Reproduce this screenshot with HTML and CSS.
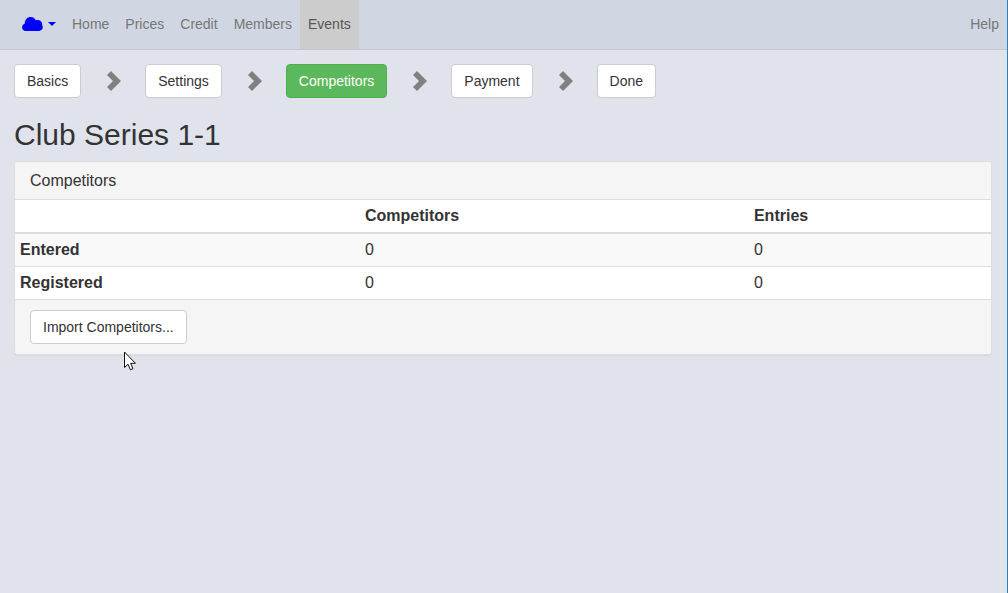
FILE: index.html
```html
<!DOCTYPE html>
<html lang="en">
<head>
<meta charset="utf-8">
<meta name="viewport" content="width=device-width, initial-scale=1">
<title>Club Series 1-1</title>
<link rel="stylesheet" href="styles.css">
</head>
<body>
<svg class="sprite" aria-hidden="true">
  <symbol id="chevron" viewBox="0 0 14 20"><path d="M4 0 14 10 4 20 0 16 6 10 0 4Z"/></symbol>
</svg>
<nav class="navbar">
  <button class="brand" type="button" aria-label="Account menu">
    <svg class="cloud" viewBox="0 0 21 14" aria-hidden="true"><path d="M4 14Q0 13.500 0 10.200 0 7.600 2.800 6.500C2.600 2.800 5.200 0 8.600 0 11 0 12.900 1.200 13.800 3.300 17.800 2.300 20.600 5 20.200 8.200 21.800 11 20 14 17 14Z"/></svg>
    <span class="caret"></span>
  </button>
  <a class="nav-link" href="#">Home</a>
  <a class="nav-link" href="#">Prices</a>
  <a class="nav-link" href="#">Credit</a>
  <a class="nav-link" href="#">Members</a>
  <a class="nav-link active" href="#">Events</a>
  <a class="nav-link help" href="#">Help</a>
</nav>
<main class="content">
  <div class="steps">
    <button class="btn" type="button">Basics</button>
    <svg class="chevron" aria-hidden="true"><use href="#chevron"/></svg>
    <button class="btn" type="button">Settings</button>
    <svg class="chevron" aria-hidden="true"><use href="#chevron"/></svg>
    <button class="btn btn-success" type="button">Competitors</button>
    <svg class="chevron" aria-hidden="true"><use href="#chevron"/></svg>
    <button class="btn" type="button">Payment</button>
    <svg class="chevron" aria-hidden="true"><use href="#chevron"/></svg>
    <button class="btn" type="button">Done</button>
  </div>
  <h1 class="title">Club Series 1-1</h1>
  <section class="panel">
    <h2 class="panel-heading">Competitors</h2>
    <table class="table">
      <thead>
        <tr><th class="col-label"></th><th class="col-competitors" scope="col">Competitors</th><th scope="col">Entries</th></tr>
      </thead>
      <tbody>
        <tr><th scope="row">Entered</th><td>0</td><td>0</td></tr>
        <tr><th scope="row">Registered</th><td>0</td><td>0</td></tr>
      </tbody>
    </table>
    <div class="panel-footer"><button class="btn" type="button">Import Competitors...</button></div>
  </section>
</main>
<svg class="pointer" viewBox="0 0 12 20" aria-hidden="true"><path d="M.5 1v15.500l3.500-3.300 2.400 5.600 2.600-1.100-2.400-5.400h4.900Z"/></svg>
</body>
</html>
```

FILE: styles.css
```css
* {
  box-sizing: border-box;
}

body {
  margin: 0;
  min-height: 100vh;
  border-right: 1px solid #2583bd;
  background: #e0e3ec;
  color: #333;
  font: 16px/22px "Liberation Sans", Arial, sans-serif;
}

.sprite {
  display: none;
}

.navbar {
  display: flex;
  height: 50px;
  padding-left: 14px;
  border-bottom: 1px solid #c4c6cb;
  background: #d0d6e2;
}

.brand {
  display: flex;
  align-items: center;
  gap: 5px;
  padding: 0 8px 1px;
  border: 0;
  background: none;
}

.cloud {
  width: 21px;
  height: 14px;
  fill: #00f;
}

.caret {
  border-top: 4px solid #00f;
  border-right: 4px solid transparent;
  border-left: 4px solid transparent;
}

.nav-link {
  padding: 14px 8px 15px;
  color: #777;
  font-size: 14px;
  line-height: 20px;
  text-decoration: none;
}

.nav-link.active {
  background: #ccc;
  color: #555;
}

.help {
  margin-left: auto;
}

.content {
  padding: 14px 15px 20px 14px;
}

.steps {
  display: flex;
  align-items: center;
}

.btn {
  padding: 6px 12px;
  border: 1px solid #ccc;
  border-radius: 4px;
  background: #fff;
  color: #333;
  font: 14px/20px "Liberation Sans", Arial, sans-serif;
}

.btn-success {
  border-color: #4cae4c;
  background: #5cb85c;
  color: #fff;
}

.chevron {
  width: 14px;
  height: 20px;
  margin: 0 24px 0 26px;
  fill: #808080;
}

.title {
  margin: 20px 0 10px;
  font-size: 30px;
  font-weight: 400;
  line-height: 33px;
}

.panel {
  border: 1px solid #ddd;
  border-radius: 4px;
  background: #fff;
  box-shadow: 0 1px 1px rgba(0, 0, 0, 0.05);
  overflow: hidden;
}

.panel-heading {
  margin: 0;
  padding: 8px 15px 7px;
  border-bottom: 1px solid #ddd;
  background: #f5f5f5;
  font-size: 16px;
  font-weight: 400;
}

.table {
  width: 100%;
  border-spacing: 0;
  table-layout: fixed;
}

.table th,
.table td {
  height: 33px;
  padding: 5px;
  border-bottom: 1px solid #ddd;
  text-align: left;
}

.table thead th {
  height: 34px;
  border-bottom-width: 2px;
}

.table tbody tr:nth-child(odd) {
  background: #f9f9f9;
}

.col-label {
  width: 35.35%;
}

.col-competitors {
  width: 39.85%;
}

.panel-footer {
  padding: 10px 15px;
  background: #f5f5f5;
}

.pointer {
  position: absolute;
  top: 351px;
  left: 124px;
  width: 12px;
  height: 20px;
  fill: #fff;
  stroke: #111;
  pointer-events: none;
}
```
